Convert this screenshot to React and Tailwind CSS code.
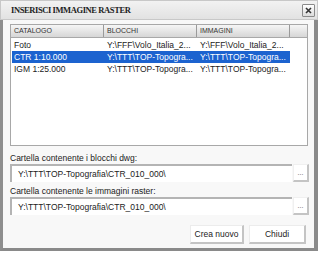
const rows = [
  { cat: "Foto", blk: "Y:\\FFF\\Volo_Italia_2...", img: "Y:\\FFF\\Volo_Italia_2..." },
  { cat: "CTR 1:10.000", blk: "Y:\\TTT\\TOP-Topogra...", img: "Y:\\TTT\\TOP-Topogra...", sel: true },
  { cat: "IGM 1:25.000", blk: "Y:\\TTT\\TOP-Topogra...", img: "Y:\\TTT\\TOP-Topogra..." },
];

const PATH = "Y:\\TTT\\TOP-Topografia\\CTR_010_000\\";

const PathField = ({ label, value }) => (
  <div className="flex flex-col">
    <div className="h-[11px] leading-[11px] text-[8.5px] text-[#222]">{label}</div>
    <div className="flex h-[18px]">
      <div className="w-[283px] border-t-2 border-l-2 border-[#b4b4b4] bg-white pl-[6px] flex items-center text-[8.5px] text-[#222]">
        {value}
      </div>
      <button className="ml-[1px] w-[16px] h-[18px] bg-white border-r-2 border-b-2 border-[#c4c4c4] border-t border-l border-t-[#f0f0f0] border-l-[#f0f0f0] text-[7px] leading-none text-[#555] flex items-end justify-center pb-[4px]">
        ...
      </button>
    </div>
  </div>
);

export default function App() {
  return (
    <div className="w-[318px] h-[253px] bg-white font-['Liberation_Sans',Arial,sans-serif] overflow-hidden">
      <div className="h-[251px] flex flex-col">
        {/* Title bar */}
        <div className="h-[20px] bg-gradient-to-b from-[#f2f2f2] to-[#e2e2e2] border border-[#c8c8c8] flex items-center justify-between pl-[10px] pr-[2px]">
          <span className="font-['Liberation_Serif',serif] font-bold text-[8.5px] tracking-[-0.4px] text-[#222] mt-[1px]">
            INSERISCI IMMAGINE RASTER
          </span>
          <button className="w-[13px] h-[13px] border border-[#8a8a8a] bg-gradient-to-b from-white to-[#dcdcdc] rounded-[1px] flex items-center justify-center">
            <svg width="7" height="7" viewBox="0 0 7 7">
              <path d="M1 1L6 6M6 1L1 6" stroke="#333" strokeWidth="1.6" />
            </svg>
          </button>
        </div>

        {/* Body */}
        <div className="flex-1 bg-[#f8f8f8] border-l-[3px] border-r-[4px] border-b-[3px] border-l-[#8e8e8e] border-r-[#8a8a8a] border-b-[#8a8a8a] pl-[7px] pr-[5px] pt-[4px] flex flex-col">
          {/* List view */}
          <div className="w-[298px] h-[122px] border border-[#a8a8a8] bg-white">
            <div className="flex h-[13px] bg-gradient-to-b from-[#f6f6f6] to-[#d6d6d6] border-b border-[#a8a8a8] text-[7px] text-[#333]">
              <div className="w-[93px] pl-[3px] border-r border-[#9a9a9a] flex items-center">CATALOGO</div>
              <div className="w-[93px] pl-[3px] border-r border-[#9a9a9a] flex items-center">BLOCCHI</div>
              <div className="w-[93px] pl-[3px] border-r border-[#9a9a9a] flex items-center">IMMAGINI</div>
              <div className="flex-1" />
            </div>
            <div className="pt-[1px]">
              {rows.map((r) => (
                <div
                  key={r.cat}
                  className={`flex h-[12px] items-center ml-[1px] w-[278px] text-[8.5px] ${
                    r.sel ? "bg-[#1c63cf] text-white" : "text-[#222]"
                  }`}
                >
                  <div className="w-[92px] pl-[2px] whitespace-nowrap">{r.cat}</div>
                  <div className="w-[93px] pl-[3px] whitespace-nowrap">{r.blk}</div>
                  <div className="w-[93px] pl-[3px] whitespace-nowrap">{r.img}</div>
                </div>
              ))}
            </div>
          </div>

          <div className="mt-[7px]">
            <PathField label="Cartella contenente i blocchi dwg:" value={PATH} />
          </div>
          <div className="mt-[4px]">
            <PathField label="Cartella contenente le immagini raster:" value={PATH} />
          </div>

          <div className="flex justify-end gap-[5px] mt-[10px] pr-[3px]">
            <button className="w-[54px] h-[19px] bg-white border-r-2 border-b-2 border-[#c4c4c4] border-t border-l border-t-[#ececec] border-l-[#ececec] text-[8.5px] text-[#222]">
              Crea nuovo
            </button>
            <button className="w-[57px] h-[19px] bg-white border-r-2 border-b-2 border-[#c4c4c4] border-t border-l border-t-[#ececec] border-l-[#ececec] text-[8.5px] text-[#222]">
              Chiudi
            </button>
          </div>
        </div>
      </div>
    </div>
  );
}
